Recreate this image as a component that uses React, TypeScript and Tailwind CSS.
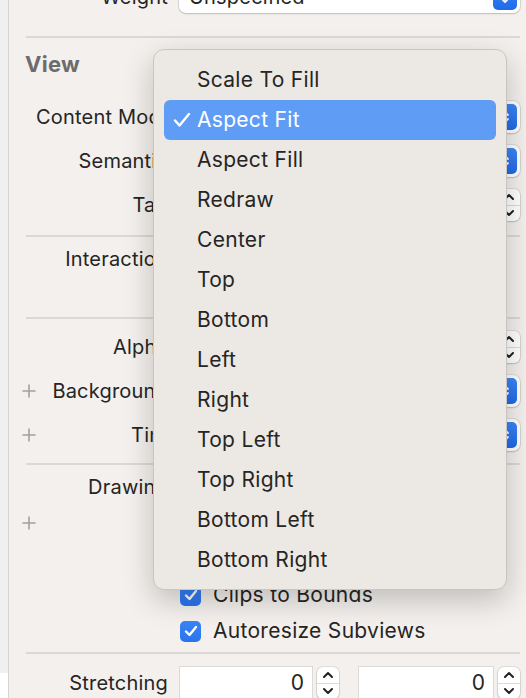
import React from "react";

const font = { fontFamily: "Inter, 'Noto Sans', 'Liberation Sans', sans-serif" };

function Plus() {
  return (
    <svg width="14" height="14" viewBox="0 0 14 14" className="block">
      <path d="M7 0.5V13.5M0.5 7H13.5" stroke="#a3a09e" strokeWidth="1.6" />
    </svg>
  );
}

function UpDown({ color = "white", w = 10 }: { color?: string; w?: number }) {
  return (
    <svg width={w} height="16" viewBox="0 0 10 16">
      <path d="M2 6L5 3L8 6M2 10L5 13L8 10" fill="none" stroke={color} strokeWidth="1.8" strokeLinecap="round" strokeLinejoin="round" />
    </svg>
  );
}

function PopUp({ text }: { text?: string }) {
  return (
    <div className="flex-1 h-[32px] rounded-[7px] bg-white shadow-[0_0_0_1px_rgba(0,0,0,0.08),0_1px_2px_rgba(0,0,0,0.15)] flex items-center pl-[10px] pr-[3px]">
      <span className="flex-1 text-[20px] tracking-[0.2px] text-[#262524] truncate">{text}</span>
      <div className="w-[24px] h-[26px] rounded-[5px] bg-gradient-to-b from-[#3d86f8] to-[#1f6ae8] flex items-center justify-center">
        <UpDown />
      </div>
    </div>
  );
}

function Stepper() {
  return (
    <div className="w-[22px] h-[32px] rounded-[6px] bg-white shadow-[0_0_0_1px_rgba(0,0,0,0.08),0_1px_2px_rgba(0,0,0,0.15)] flex flex-col items-center">
      <div className="flex-1 flex items-center justify-center">
        <svg width="12" height="8" viewBox="0 0 12 8"><path d="M2 6L6 2L10 6" fill="none" stroke="#222" strokeWidth="2" strokeLinecap="round" strokeLinejoin="round" /></svg>
      </div>
      <div className="w-full h-px bg-[#dedbd8]" />
      <div className="flex-1 flex items-center justify-center">
        <svg width="12" height="8" viewBox="0 0 12 8"><path d="M2 2L6 6L10 2" fill="none" stroke="#222" strokeWidth="2" strokeLinecap="round" strokeLinejoin="round" /></svg>
      </div>
    </div>
  );
}

function NumField({ value, w }: { value: string; w: string }) {
  return (
    <div className={`${w} h-[34px] bg-white border border-[#dcd9d6] flex items-center justify-end pr-[8px] text-[21px] text-[#262524]`}>
      {value}
    </div>
  );
}

function Check() {
  return (
    <div className="w-[21px] h-[21px] rounded-[5px] bg-gradient-to-b from-[#3b85f8] to-[#2a73ec] flex items-center justify-center shrink-0">
      <svg width="14" height="12" viewBox="0 0 14 12"><path d="M2 6.5L5.5 10L12 2" fill="none" stroke="white" strokeWidth="2.4" strokeLinecap="round" strokeLinejoin="round" /></svg>
    </div>
  );
}

function Row({ label, h = "h-[44px]", plus, children }: { label?: string; h?: string; plus?: boolean; children?: React.ReactNode }) {
  return (
    <div className={`${h} flex items-center`}>
      <div className="w-[142px] shrink-0 flex items-center">
        <div className="w-[14px] shrink-0 ml-[-4px]">{plus ? <Plus /> : null}</div>
        <div className="flex-1 text-right text-[20px] tracking-[0.2px] text-[#262524] whitespace-nowrap">{label}</div>
      </div>
      <div className="ml-[11px] flex-1 flex items-center gap-[4px]">{children}</div>
    </div>
  );
}

function CheckRow({ label, text, plus }: { label?: string; text: string; plus?: boolean }) {
  return (
    <Row label={label} h="h-[36px]" plus={plus}>
      <div className="flex items-center gap-[12px] ml-[1px]">
        <Check />
        <span className="text-[21px] tracking-[0.3px] text-[#262524] whitespace-nowrap">{text}</span>
      </div>
    </Row>
  );
}

const Sep = ({ mt }: { mt: string }) => <div className={`${mt} h-[2px] bg-[#dcd8d5]`} />;

const items = [
  "Scale To Fill",
  "Aspect Fit",
  "Aspect Fill",
  "Redraw",
  "Center",
  "Top",
  "Bottom",
  "Left",
  "Right",
  "Top Left",
  "Top Right",
  "Bottom Left",
  "Bottom Right",
];

export default function App() {
  return (
    <div className="relative w-[526px] h-[698px] overflow-hidden flex" style={font}>
      <div className="w-[8px] flex flex-col shrink-0">
        <div className="h-[673px] bg-[#f0f0f0]" />
        <div className="flex-1 bg-white" />
      </div>
      <div className="w-px bg-[#d8d4d1] shrink-0" />
      <div className="flex-1 bg-[#f3f0ed] pl-[17px] pr-[13px]">
        <div className="mt-[-25px]">
          <Row label="Weight">
            <PopUp text="Unspecified" />
          </Row>
        </div>
        <Sep mt="mt-[17px]" />
        <div className="mt-[6px] h-[40px] flex items-center text-[22px] tracking-[0.3px] font-bold text-[#6e6c6a] -ml-[1px]">View</div>
        <div className="mt-[11px]">
          <Row label="Content Mode"><PopUp text="Aspect Fit" /></Row>
          <Row label="Semantic"><PopUp text="Unspecified" /></Row>
          <Row label="Tag">
            <NumField value="0" w="flex-1" />
            <Stepper />
          </Row>
        </div>
        <Sep mt="mt-[8px]" />
        <div className="mt-[4px]">
          <CheckRow label="Interaction" text="User Interaction Enabled" />
          <CheckRow text="Multiple Touch" />
        </div>
        <Sep mt="mt-[4px]" />
        <div className="mt-[6px]">
          <Row label="Alpha">
            <NumField value="1" w="flex-1" />
            <Stepper />
          </Row>
          <Row label="Background" plus><PopUp text="Default" /></Row>
          <Row label="Tint" plus><PopUp text="Default" /></Row>
        </div>
        <Sep mt="mt-[6px]" />
        <div className="mt-[4px]">
          <CheckRow label="Drawing" text="Opaque" />
          <CheckRow text="Hidden" plus />
          <CheckRow text="Clears Graphics Context" />
          <CheckRow text="Clips to Bounds" />
          <CheckRow text="Autoresize Subviews" />
        </div>
        <Sep mt="mt-[3px]" />
        <div className="mt-[7px]">
          <Row label="Stretching">
            <NumField value="0" w="w-[134px]" />
            <Stepper />
            <div className="w-[11px]" />
            <NumField value="0" w="w-[136px]" />
            <Stepper />
          </Row>
        </div>
      </div>

      <div className="absolute left-[153px] top-[49px] w-[354px] h-[541px] rounded-[11px] bg-[#ece8e4] border border-[#c9c5c2] shadow-[0_10px_30px_rgba(0,0,0,0.22)] px-[10px] pt-[10px]">
        {items.map((it) => {
          const sel = it === "Aspect Fit";
          return (
            <div
              key={it}
              className={`h-[40px] rounded-[6px] flex items-center ${sel ? "bg-[#5f9cf6] text-white" : "text-[#262524]"}`}
            >
              <div className="w-[33px] flex justify-center shrink-0 pl-[2px]">
                {sel ? (
                  <svg width="18" height="16" viewBox="0 0 18 16"><path d="M2 8.5L6.5 13.5L16 2" fill="none" stroke="white" strokeWidth="2.4" strokeLinecap="round" strokeLinejoin="round" /></svg>
                ) : null}
              </div>
              <span className="text-[21px] tracking-[0.3px] whitespace-nowrap">{it}</span>
            </div>
          );
        })}
      </div>
    </div>
  );
}
